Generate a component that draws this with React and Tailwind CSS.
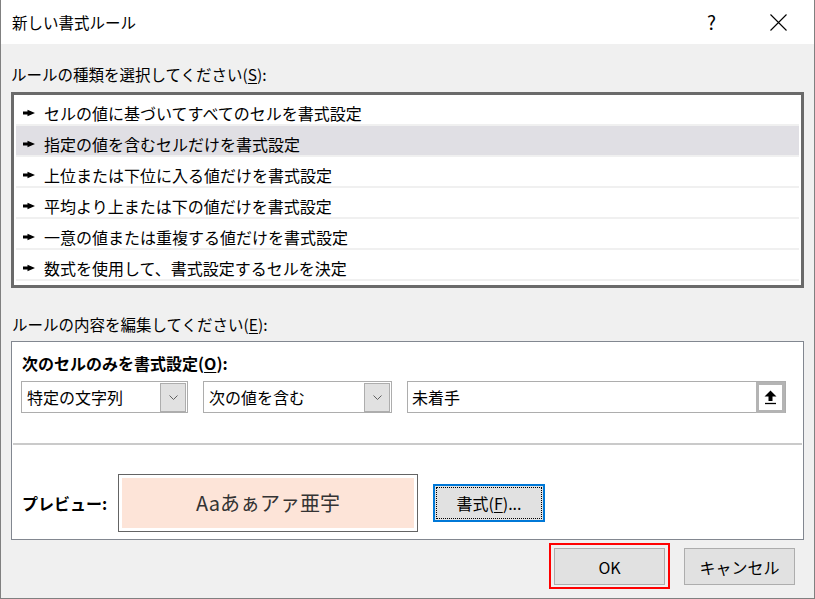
const rules = [
  "セルの値に基づいてすべてのセルを書式設定",
  "指定の値を含むセルだけを書式設定",
  "上位または下位に入る値だけを書式設定",
  "平均より上または下の値だけを書式設定",
  "一意の値または重複する値だけを書式設定",
  "数式を使用して、書式設定するセルを決定",
];

const Pointer = () => (
  <svg width="12" height="8" viewBox="0 0 12 8" className="shrink-0">
    <path d="M0 2.6 H4.5 V0.8 L12 4 L4.5 7.2 V5.4 H0z" fill="#000" />
  </svg>
);

const Chevron = () => (
  <svg width="9" height="5" viewBox="0 0 9 5">
    <path d="M0.5 0.5 L4.5 4.5 L8.5 0.5" fill="none" stroke="#606060" strokeWidth="1" />
  </svg>
);

const Select = ({ value, width }) => (
  <div className={`flex h-[32px] items-center border border-[#adadad] bg-white ${width}`}>
    <span className="flex-1 pl-[5px] text-[16px] leading-[20px] text-black">{value}</span>
    <span className="mr-[1px] flex h-[29px] w-[26px] items-center justify-center border border-[#adadad] bg-[#e1e1e1]">
      <Chevron />
    </span>
  </div>
);

export default function App() {
  return (
    <div className="flex h-[599px] w-[815px] flex-col border-x border-b border-[#808080] bg-[#f0f0f0] font-['Noto_Sans_CJK_JP','Noto_Sans',sans-serif] text-black">
      {/* title bar */}
      <div className="flex h-[44px] shrink-0 items-center bg-white pl-[11px]">
        <span className="flex-1 text-[15.5px] leading-[20px]">新しい書式ルール</span>
        <span className="mr-[54px] text-[19px] leading-[20px]">?</span>
        <svg width="17" height="17" viewBox="0 0 17 17" className="mr-[27px]">
          <path d="M0.5 0.5 L16.5 16.5 M16.5 0.5 L0.5 16.5" stroke="#000" strokeWidth="1.1" />
        </svg>
      </div>

      <div className="flex flex-1 flex-col px-[10px]">
        <div className="mt-[20px] h-[20px] text-[15.5px] leading-[20px]">
          ルールの種類を選択してください(<span className="underline underline-offset-2">S</span>):
        </div>

        {/* rule list */}
        <div className="mt-[8px] h-[196px] border-[3px] border-[#6a6a6a] bg-white px-[2px]">
          {rules.map((r, i) => (
            <div
              key={r}
              className={`flex h-[31px] items-center gap-[9px] border-b-2 border-[#f0f0f0] pl-[7px] pt-[6px] ${
                i === 1 ? "bg-[#e0dfe4]" : "bg-white"
              }`}
            >
              <Pointer />
              <span className="text-[16px] leading-[20px]">{r}</span>
            </div>
          ))}
        </div>

        <div className="mt-[26px] h-[20px] pl-[1px] text-[15.5px] leading-[20px]">
          ルールの内容を編集してください(<span className="underline underline-offset-2">E</span>):
        </div>

        {/* rule editor */}
        <div className="mt-[7px] flex h-[199px] flex-col border border-[#828790] bg-white">
          <div className="mt-[11px] h-[20px] pl-[10px] text-[16px] font-bold leading-[20px]">
            次のセルのみを書式設定(<span className="underline underline-offset-2">O</span>):
          </div>
          <div className="mt-[8px] flex items-center gap-[15px] pl-[9px]">
            <Select value="特定の文字列" width="w-[167px]" />
            <Select value="次の値を含む" width="w-[189px]" />
            <div className="flex h-[32px] w-[379px] items-center border border-[#adadad] bg-white">
              <span className="flex-1 pl-[4px] text-[16px] leading-[20px]">未着手</span>
              <span className="flex h-[31px] w-[29px] items-center justify-center border-[3px] border-[#b4b4b4] bg-white">
                <svg width="13" height="15" viewBox="0 0 13 15">
                  <path d="M6.5 0.5 L12.5 6.5 H8.5 V11 H4.5 V6.5 H0.5z" fill="#000" />
                  <path d="M1 13.5 H12" stroke="#000" strokeWidth="1.3" />
                </svg>
              </span>
            </div>
          </div>
          <div className="mx-[1px] mt-[30px] h-[2px] bg-[#cacaca]" />
          <div className="mt-[29px] flex items-center pl-[10px]">
            <span className="w-[96px] text-[16px] font-bold leading-[20px]">プレビュー:</span>
            <div className="h-[58px] w-[300px] border border-[#646464] bg-white p-[3px]">
              <div className="flex h-full items-center justify-center bg-[#fde4d8] text-[20px] leading-[24px] text-[#333]">
                Aaあぁアァ亜宇
              </div>
            </div>
            <div className="ml-[15px] h-[38px] w-[112px] border-2 border-[#0078d7] bg-[#e1e1e1] p-[1px]">
              <div className="flex h-full items-center justify-center border border-dotted border-black text-[16px] leading-[20px]">
                書式(<span className="underline underline-offset-2">F</span>)...
              </div>
            </div>
          </div>
        </div>

        {/* buttons */}
        <div className="mt-[3px] flex justify-end gap-[14px] pr-[9px]">
          <div className="border-2 border-[#ff0000] px-[3px] pb-[2px] pt-[3px]">
            <button className="flex h-[37px] w-[111px] items-center justify-center border border-[#adadad] bg-[#e1e1e1] text-[16px] leading-[20px]">
              OK
            </button>
          </div>
          <button className="mt-[5px] flex h-[37px] w-[111px] items-center justify-center border border-[#adadad] bg-[#e1e1e1] text-[16px] leading-[20px]">
            キャンセル
          </button>
        </div>
      </div>
    </div>
  );
}
